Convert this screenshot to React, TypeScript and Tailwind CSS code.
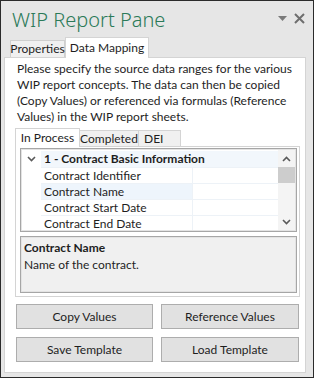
import React from 'react';

const font = { fontFamily: 'Lato, "Noto Sans", sans-serif' };

function Chevron({ up = false, className = '' }: { up?: boolean; className?: string }) {
  return (
    <svg width="9" height="6" viewBox="0 0 9 6" className={className}>
      <polyline
        points={up ? '1,5 4.5,1.5 8,5' : '1,1 4.5,4.5 8,1'}
        fill="none"
        stroke="#5a5a5a"
        strokeWidth="1.6"
      />
    </svg>
  );
}

const rows = ['Contract Identifier', 'Contract Name', 'Contract Start Date', 'Contract End Date'];

function Sunken({ className = '', children }: { className?: string; children: React.ReactNode }) {
  return (
    <div className={`border border-[#a6a6a6] ${className}`}>
      <div className="h-full w-full border border-[#e3e3e3]">{children}</div>
    </div>
  );
}

export default function App() {
  return (
    <div
      className="w-[314px] h-[378px] border border-[#2b2b2b] bg-[#e6e6e6] flex flex-col text-[12px] text-[#1e1e1e]"
      style={font}
    >
      {/* title bar */}
      <div className="h-[36px] flex items-start justify-between">
        <div
          className="ml-[11px] mt-[7px] text-[20px] leading-[24px] font-light text-[#2b7a58]"
          style={{ fontFamily: '"Noto Sans", sans-serif' }}
        >
          WIP Report Pane
        </div>
        <div className="flex items-center mr-[8px] mt-[12px] gap-[7px]">
          <svg width="9" height="5" viewBox="0 0 9 5">
            <polygon points="0,0 9,0 4.5,5" fill="#7a7a7a" />
          </svg>
          <svg width="11" height="11" viewBox="0 0 11 11">
            <path d="M1 1 L10 10 M10 1 L1 10" stroke="#6e6e6e" strokeWidth="2" />
          </svg>
        </div>
      </div>

      {/* outer tabs */}
      <div className="flex items-end h-[20px] ml-[9px] relative z-10">
        <div className="h-[17px] w-[55px] border border-b-0 border-[#cfcfcf] bg-[#f0f0f0] flex items-center justify-center leading-none">
          Properties
        </div>
        <div className="h-[21px] w-[84px] border border-b-0 border-[#d4d4d4] bg-white flex items-center justify-center leading-none -mb-px">
          Data Mapping
        </div>
      </div>

      {/* content panel */}
      <div className="ml-[3px] w-[302px] h-[316px] border border-[#d4d4d4] bg-white flex flex-col">
        <p className="pl-[12px] pr-[8px] pt-[3px] leading-[16px]">
          Please specify the source data ranges for the various WIP report concepts. The data can then be copied
          (Copy Values) or referenced via formulas (Reference Values) in the WIP report sheets.
        </p>

        {/* inner tabs */}
        <div className="flex items-end h-[19px] mt-[2px] ml-[10px] relative z-10">
          <div className="h-[19px] w-[65px] border border-b-0 border-[#d4d4d4] bg-white flex items-center justify-center leading-none -mb-px">
            In Process
          </div>
          <div className="h-[16px] w-[59px] border border-b-0 border-l-0 border-[#d4d4d4] bg-[#f0f0f0] flex items-center justify-center leading-none">
            Completed
          </div>
          <div className="h-[16px] w-[42px] border border-b-0 border-l-0 border-[#d4d4d4] bg-[#f0f0f0] flex items-center pl-[5px] leading-none">
            DEI
          </div>
        </div>

        <div className="ml-[10px] w-[285px] h-[151px] border border-[#d4d4d4] flex flex-col pl-[4px] pt-[1px]">
          {/* tree grid */}
          <Sunken className="w-[277px] h-[84px]">
            <div className="flex h-full pt-[1px]">
              <div className="flex-1 flex flex-col overflow-hidden">
                <div className="flex h-[16px] shrink-0">
                  <div className="w-[19px] flex items-center justify-center bg-white">
                    <Chevron />
                  </div>
                  <div className="flex-1 bg-[#f2f7fc] pl-[3px] font-bold leading-[16px] whitespace-nowrap">
                    1 - Contract Basic Information
                  </div>
                </div>
                {rows.map(r => (
                  <div key={r} className="flex h-[16px] shrink-0">
                    <div className="w-[19px] bg-white" />
                    <div
                      className={`w-[152px] pl-[3px] leading-[16px] border-t border-r border-[#edf2f7] whitespace-nowrap ${
                        r === 'Contract Name' ? 'bg-[#eef5fc]' : 'bg-white'
                      }`}
                    >
                      {r}
                    </div>
                    <div className="flex-1 border-t border-[#edf2f7]" />
                  </div>
                ))}
              </div>
              {/* scrollbar */}
              <div className="w-[17px] -mt-[1px] bg-[#f4f4f4] flex flex-col items-center">
                <div className="h-[17px] flex items-center justify-center">
                  <Chevron up />
                </div>
                <div className="w-[17px] h-[16px] bg-[#cdcdcd]" />
                <div className="flex-1" />
                <div className="h-[17px] flex items-center justify-center">
                  <Chevron />
                </div>
              </div>
            </div>
          </Sunken>

          {/* description */}
          <Sunken className="w-[277px] h-[57px] mt-[4px]">
            <div className="h-full bg-[#f0f0f0] pl-[2px] pt-[1px] leading-[17px]">
              <div className="font-bold">Contract Name</div>
              <div>Name of the contract.</div>
            </div>
          </Sunken>
        </div>

        {/* buttons */}
        <div className="grid grid-cols-[137px_138px] gap-x-[8px] gap-y-[8px] ml-[11px] mt-[7px]">
          {['Copy Values', 'Reference Values', 'Save Template', 'Load Template'].map(b => (
            <button
              key={b}
              className="h-[25px] border border-[#adadad] bg-[#e1e1e1] flex items-center justify-center leading-none"
            >
              {b}
            </button>
          ))}
        </div>
      </div>
    </div>
  );
}
